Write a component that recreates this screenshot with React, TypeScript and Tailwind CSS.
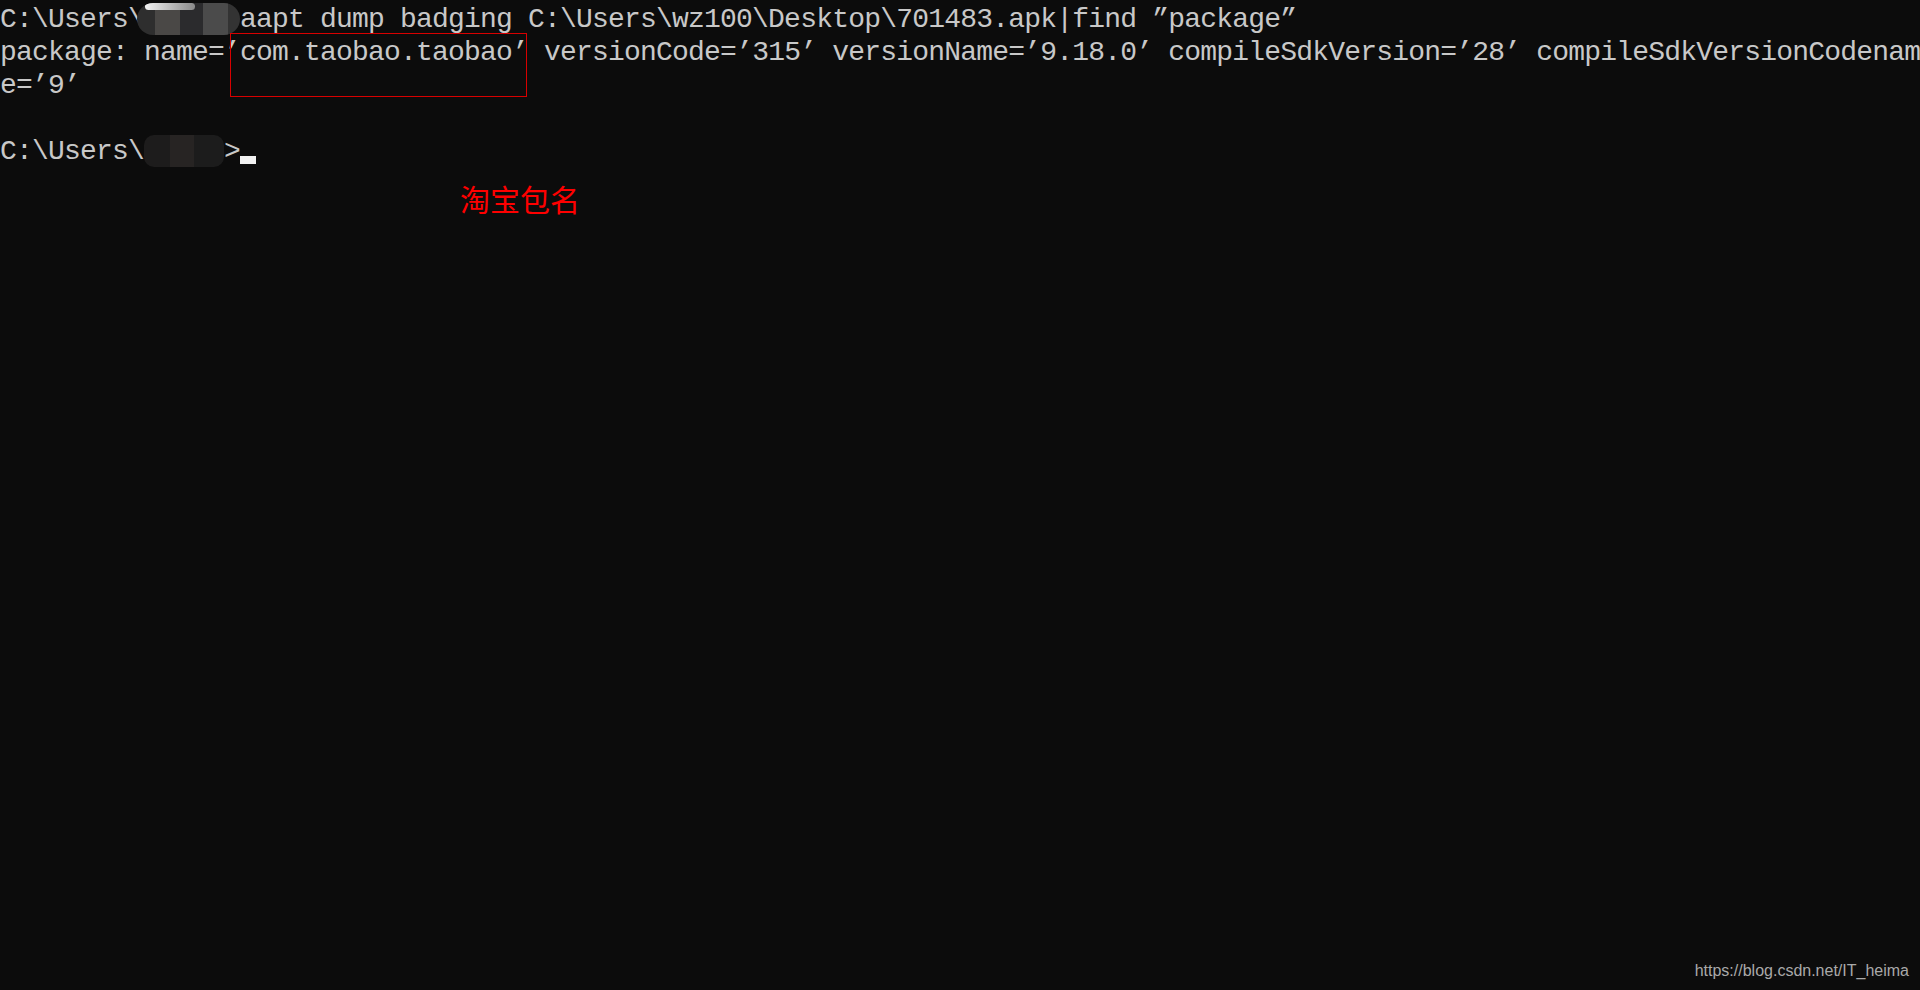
import React from "react";

/**
 * A Windows console window showing aapt output, with a red annotation box
 */
const mono = "font-['Liberation_Mono','DejaVu_Sans_Mono',monospace]";

function BlurTop() {
  // Mosaic blot that hides the user name on the first line
  return (
    <span className="relative inline-block align-top h-[32px] w-[103px] -ml-[7px] rounded-[16px] overflow-hidden blur-[0.6px]">
      <span className="flex h-full w-full">
        <span className="h-full w-[18px] bg-[#2e2e2e]" />
        <span className="h-full w-[25px] bg-[#4a4846]" />
        <span className="h-full w-[23px] bg-[#2b2b2d]" />
        <span className="h-full w-[25px] bg-[#4b4b4b]" />
        <span className="h-full w-[12px] bg-[#333333]" />
      </span>
      <span className="absolute left-[8px] top-0 h-[7px] w-[50px] rounded-full bg-gradient-to-r from-[#f4f4f4] to-[#8a8a8a]" />
    </span>
  );
}

function BlurPrompt() {
  // Dark blot over the user name on the prompt line
  return (
    <span className="inline-block align-top h-[32px] w-[80px] rounded-[10px] overflow-hidden">
      <span className="flex h-full w-full">
        <span className="h-full w-[26px] bg-[#1d1c1c]" />
        <span className="h-full w-[24px] bg-[#272423]" />
        <span className="h-full w-[30px] bg-[#1c1c1c]" />
      </span>
    </span>
  );
}

export default function App() {
  return (
    <div className="relative h-[990px] w-[1920px] overflow-hidden bg-[#0c0c0c]">
      <div
        className={`${mono} pt-[3px] text-[28px] leading-[33px] tracking-[-0.8px] text-[#c8c8c8] whitespace-pre`}
      >
        <div>
          C:\Users\
          <BlurTop />
          aapt dump badging C:\Users\wz100\Desktop\701483.apk|find ”package”
        </div>
        <div>
          package: name=’com.taobao.taobao’ versionCode=’315’ versionName=’9.18.0’ compileSdkVersion=’28’ compileSdkVersionCodenam
        </div>
        <div>e=’9’</div>
        <div>&nbsp;</div>
        <div>
          C:\Users\
          <BlurPrompt />
          &gt;
          <span className="inline-block h-[8px] w-[16px] bg-[#f2f2f2] align-[-5px]" />
        </div>
      </div>

      {/* annotation drawn over the console */}
      <div className="absolute left-[230px] top-[33px] h-[64px] w-[297px] border border-[#d80000]" />
      <div className="absolute left-[460px] top-[183px] font-['Noto_Sans_CJK_SC',sans-serif] text-[30px] leading-[30px] text-[#ff0000]">
        淘宝包名
      </div>

      <div className="absolute right-[11px] bottom-[10px] font-['Liberation_Sans',Arial,sans-serif] text-[16px] leading-[18px] text-[#a9a9a9]">
        https://blog.csdn.net/IT_heima
      </div>
    </div>
  );
}
